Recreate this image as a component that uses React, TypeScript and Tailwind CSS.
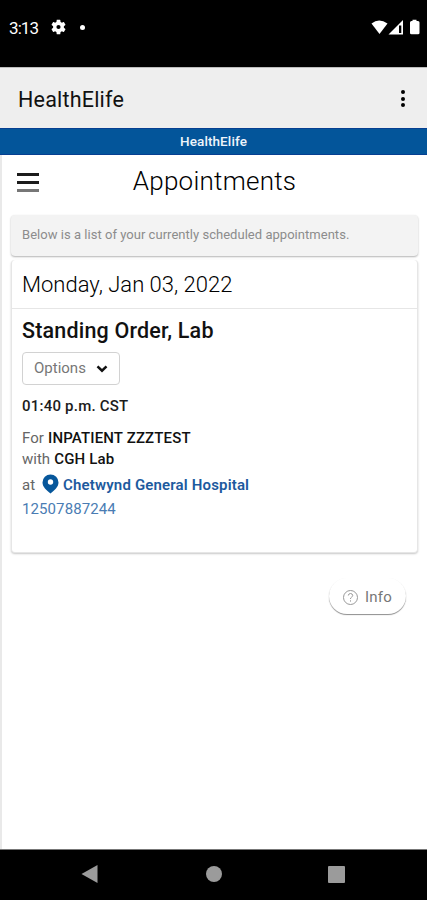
import React from "react";

function StatusBar() {
  return (
    <div className="flex h-[67px] shrink-0 items-start bg-black pt-[18px] pl-[9px] pr-[6px] text-white">
      <span className="w-[42px] text-[17px] leading-[20px] tracking-[-0.9px]">3:13</span>
      <svg className="mt-[1px]" width="15" height="16" viewBox="2 2 20 20" fill="#fff">
        <path d="M19.14 12.94c.04-.3.06-.61.06-.94s-.02-.64-.07-.94l2.03-1.58c.18-.14.23-.41.12-.61l-1.92-3.32c-.12-.22-.37-.29-.59-.22l-2.39.96c-.5-.38-1.03-.7-1.62-.94l-.36-2.54A.48.48 0 0 0 13.92 2.400h-3.84c-.24 0-.43.17-.47.41l-.36 2.54c-.59.24-1.13.57-1.62.94l-2.39-.96c-.22-.08-.47 0-.59.22L2.740 8.870c-.12.21-.08.47.12.61l2.03 1.58c-.05.3-.09.63-.09.94s.02.64.07.94l-2.03 1.58c-.18.14-.23.41-.12.61l1.920 3.320c.12.22.37.29.59.22l2.390-.96c.5.38 1.030.7 1.620.94l.36 2.540c.05.24.24.41.48.41h3.840c.24 0 .44-.17.47-.41l.36-2.540c.59-.24 1.130-.56 1.620-.94l2.390.96c.22.08.47 0 .59-.22l1.920-3.320c.12-.22.07-.47-.12-.61zM12 14.8a2.8 2.8 0 1 1 0-5.6 2.8 2.800 0 0 1 0 5.6z" />
      </svg>
      <span className="mt-[7px] ml-[14px] h-[5px] w-[5px] rounded-full bg-white" />
      <svg className="mt-[1px] ml-auto" width="51" height="16" viewBox="0 0 51 16" fill="#fff">
        <path d="M1.500 4.500Q9 -1.500 17.500 4.500L9.500 15Z" />
        <path d="M33 1V15.500H18.500Z" />
        <path d="M29 6.500h2.300v7.500h-2.300z" fill="#000" />
        <path d="M42.500 2V.7h4V2h1.500q1.500 0 1.500 1.500v10.500q0 1.200-1.500 1.200h-6.500q-1.500 0-1.500-1.200V3.500Q40 2 41.500 2Z" />
      </svg>
    </div>
  );
}

function AppBar() {
  return (
    <header className="flex h-[61px] shrink-0 items-center justify-between border-t border-[#bdbdbd] bg-[#eeeeee] pt-[2px] pl-[18px] pr-[22px]">
      <span className="mt-[2px] text-[21.500px] leading-6 tracking-[0.2px] text-[#111]">HealthElife</span>
      <span className="-mt-[1px] flex flex-col gap-[2.500px]">
        <i className="size-[4px] rounded-full bg-black" />
        <i className="size-[4px] rounded-full bg-black" />
        <i className="size-[4px] rounded-full bg-black" />
      </span>
    </header>
  );
}

function AppointmentCard() {
  return (
    <article className="mt-[4px] h-[293px] rounded-[4px] border border-t-0 border-[#e6e6e6] bg-white shadow-[0_1px_2px_rgba(0,0,0,0.22)]">
      <h2 className="h-[49px] border-b border-[#e6e6e6] pt-[9px] pl-[10px] text-[22px] leading-[32px] font-light text-black">
        Monday, Jan 03, 2022
      </h2>
      <div className="pl-[10px] text-[15px] text-[#666]">
        <h3 className="pt-[8px] text-[21.500px] leading-[28px] font-medium tracking-[0.18px] text-[#111]">Standing Order, Lab</h3>
        <button className="mt-[7px] flex h-[33px] w-[98px] items-center rounded-[4px] border border-[#d2d2d2] pl-[11px] text-[15px] text-[#777]">
          <span>Options</span>
          <svg className="ml-auto mr-[11px]" width="12" height="8" viewBox="0 0 12 8" fill="none" stroke="#111" strokeWidth="2.500">
            <path d="M1.500 1.300L6 5.700L10.500 1.300" />
          </svg>
        </button>
        <p className="mt-[11px] leading-[20px] font-medium tracking-[0.22px] text-[#1c1c1c]">01:40 p.m. CST</p>
        <p className="mt-[11px] leading-[22px]">
          For <b className="ml-[0.500px] font-medium tracking-[0.15px] text-[#111]">INPATIENT ZZZTEST</b>
        </p>
        <p className="leading-[21px]">
          with <b className="ml-[0.500px] font-medium tracking-[0.15px] text-[#111]">CGH Lab</b>
        </p>
        <p className="mt-[2px] flex h-[27px] items-center">
          <span>at</span>
          <svg className="-mt-[4px] ml-[7px] mr-[4px]" width="17" height="20" viewBox="0 0 17 20">
            <path d="M8.500 0.500A8 8 0 0 0 .5 8.500C.5 13 4.500 16 8.500 19.500C12.500 16 16.500 13 16.500 8.500A8 8 0 0 0 8.500 .5Z" fill="#07579b" />
            <circle cx="8.500" cy="8" r="2.700" fill="#fff" />
          </svg>
          <a className="font-semibold tracking-[0.16px] text-[#1d5a9e]">Chetwynd General Hospital</a>
        </p>
        <a className="block leading-[21px] tracking-[0.1px] text-[#4a7cb3]">12507887244</a>
      </div>
    </article>
  );
}

function NavBar() {
  return (
    <nav className="flex h-[51px] shrink-0 items-center justify-between border-t border-[#777] bg-black pr-[82px] pb-[2px] pl-[81px]">
      <svg width="17" height="18" viewBox="0 0 17 18"><path d="M.5 9L16.500 0V18Z" fill="#9b9b9b" /></svg>
      <span className="ml-[1px] size-[16px] rounded-full bg-[#9b9b9b]" />
      <span className="size-[17px] rounded-[1px] bg-[#9b9b9b]" />
    </nav>
  );
}

export default function App() {
  return (
    <div className="flex h-[900px] w-[427px] flex-col overflow-hidden bg-white whitespace-nowrap font-[Roboto,sans-serif]">
      <StatusBar />
      <AppBar />
      <div className="h-[27px] shrink-0 border-y border-[#063f91] bg-[#03559a] text-center text-[13.500px] leading-[25px] font-medium tracking-[0.1px] text-[#eef4fa]">
        HealthElife
      </div>
      <main className="flex grow flex-col border-l-2 border-[#e9e9e9] pr-[9px] pl-[9px]">
        <div className="grid h-[60px] grid-cols-[1fr_auto_1fr] items-start">
          <div className="mt-[18px] ml-[6px] flex w-[22px] flex-col gap-[5px]">
            <i className="h-[3px] bg-[#1c1c1c]" />
            <i className="h-[3px] bg-[#1c1c1c]" />
            <i className="h-[3px] bg-[#777]" />
          </div>
          <h1 className="mt-[10px] text-[26px] leading-[32px] font-light tracking-[0.25px] text-black">Appointments</h1>
        </div>
        <p className="h-[41px] rounded-[4px] bg-[#f3f3f3] pl-[11px] text-[13px] leading-[40px] tracking-[0.03px] text-[#8c8c8c] shadow-[0_1px_2px_rgba(0,0,0,0.3)]">
          Below is a list of your currently scheduled appointments.
        </p>
        <AppointmentCard />
        <button className="mt-[25px] mr-[12px] flex h-[36px] w-[77px] items-center self-end rounded-full bg-white pt-[2px] pl-[13px] text-[15px] text-[#777] shadow-[0_1px_1px_rgba(0,0,0,0.45)]">
          <svg width="17" height="17" viewBox="0 0 17 17" fill="none" stroke="#999">
            <circle cx="8.500" cy="8.500" r="7" />
            <path d="M6.300 6.500Q6.500 4.500 8.500 4.500T10.700 6.500Q10.700 7.500 9.500 8.200T8.500 10M8.500 11.300v1.300" />
          </svg>
          <span className="ml-[6px] tracking-[0.2px]">Info</span>
        </button>
      </main>
      <NavBar />
    </div>
  );
}
